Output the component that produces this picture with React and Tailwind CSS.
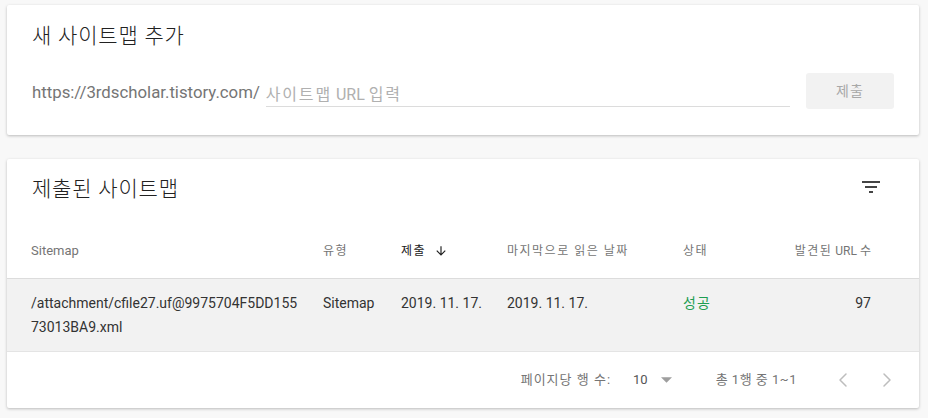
import { ChevronLeft, ChevronRight } from "lucide-react";

const font = { fontFamily: "Roboto, 'Noto Sans CJK KR', sans-serif" };

function FilterIcon() {
  return (
    <svg width="24" height="24" viewBox="0 0 24 24" fill="#444">
      <path d="M10 18h4v-2h-4v2zM3 6v2h18V6H3zm3 7h12v-2H6v2z" />
    </svg>
  );
}

function SortDown() {
  return (
    <svg width="14" height="14" viewBox="0 0 24 24" fill="#212121">
      <path d="M20 12l-1.41-1.41L13 16.17V4h-2v12.17l-5.58-5.59L4 12l8 8 8-8z" />
    </svg>
  );
}

export default function App() {
  return (
    <div
      className="min-h-[418px] w-full bg-[#f8f8f8] pl-[7px] pr-[9px] pt-[5px] pb-[10px] text-[#212121]"
      style={font}
    >
      {/* add new sitemap */}
      <div className="rounded-[2px] bg-white px-[25px] pt-[17px] pb-[26px] shadow-[0_1px_3px_rgba(0,0,0,0.25)]">
        <h2 className="text-[21px] leading-[28px] font-light tracking-[0.8px] text-[#212121]">새 사이트맵 추가</h2>
        <div className="mt-[23px] flex h-[36px] items-start">
          <span className="mt-[9px] text-[16.8px] leading-[20px] text-[#757575] whitespace-nowrap">
            https://3rdscholar.tistory.com/
          </span>
          <div className="ml-[6px] mt-[12px] flex-1 border-b border-[#dcdcdc] pb-[1px] text-[16px] leading-[20px] text-[#b0b0b0]">
            <span className="tracking-[1.8px]">사이트맵</span> URL <span className="tracking-[1.8px]">입력</span>
          </div>
          <button className="ml-[16px] h-[36px] w-[88px] rounded-[3px] bg-[#f2f2f2] text-[14px] tracking-[1px] text-[#a8a8a8]">
            제출
          </button>
        </div>
      </div>

      {/* submitted sitemaps */}
      <div className="mt-[24px] rounded-[2px] bg-white shadow-[0_1px_3px_rgba(0,0,0,0.25)]">
        <div className="flex h-[64px] items-start justify-between pl-[25px] pr-[36px] pt-[16px]">
          <h2 className="text-[21px] leading-[28px] font-light tracking-[0.8px] text-[#212121]">제출된 사이트맵</h2>
          <FilterIcon />
        </div>

        <div className="flex h-[56px] items-center border-b border-[#dcdcdc] text-[13px] text-[#757575]">
          <div className="w-[316px] pl-[24px]">Sitemap</div>
          <div className="w-[78px] text-[12px] tracking-[1.5px]">유형</div>
          <div className="flex w-[106px] items-center gap-[8px] text-[12px] tracking-[1.5px] text-[#212121]">
            제출 <SortDown />
          </div>
          <div className="w-[176px] text-[12px] tracking-[1.5px]">마지막으로 읽은 날짜</div>
          <div className="w-[80px] text-[12px] tracking-[1.5px]">상태</div>
          <div className="flex-1 pr-[48px] text-right text-[12px]">
            <span className="tracking-[1.5px]">발견된</span> URL 수
          </div>
        </div>

        <div className="flex border-b border-[#e4e4e4] bg-[#f2f2f2] py-[12px] text-[14px] leading-[24px] text-[#333]">
          <div className="w-[316px] pl-[24px]">
            <div className="w-[272px] break-all">/attachment/cfile27.uf@9975704F5DD15573013BA9.xml</div>
          </div>
          <div className="w-[78px]">Sitemap</div>
          <div className="w-[106px]">2019. 11. 17.</div>
          <div className="w-[176px]">2019. 11. 17.</div>
          <div className="w-[80px] tracking-[1px] text-[#1e9e52]">성공</div>
          <div className="flex-1 pr-[48px] text-right">97</div>
        </div>

        <div className="flex h-[56px] items-center justify-end pr-[20px] text-[13px] text-[#757575]">
          <span className="tracking-[1px]">페이지당 행 수:</span>
          <span className="ml-[22px] text-[#555]">10</span>
          <svg className="ml-[13px]" width="11" height="6" viewBox="0 0 10 5" fill="#9e9e9e">
            <path d="M0 0l5 5 5-5z" />
          </svg>
          <span className="ml-[44px] tracking-[0.5px]">총 1행 중 1~1</span>
          <div className="ml-[34px] flex gap-[20px] text-[#bdbdbd]">
            <ChevronLeft size={24} strokeWidth={1.5} />
            <ChevronRight size={24} strokeWidth={1.5} />
          </div>
        </div>
      </div>
    </div>
  );
}
